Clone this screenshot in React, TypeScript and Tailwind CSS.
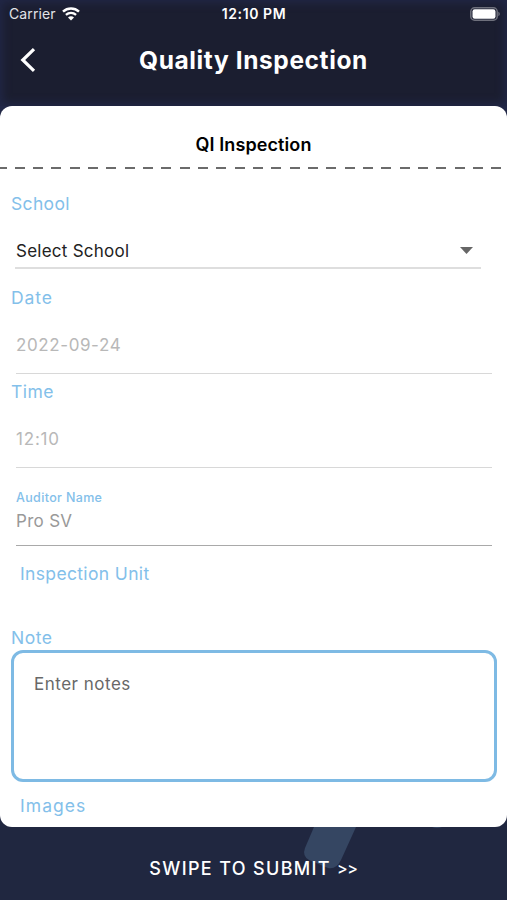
import { useState } from "react";

const dashes = Array.from({ length: 28 });

function WifiIcon() {
  return (
    <svg width="18" height="14" viewBox="0 0 18 14" fill="none">
      <path d="M1 4.7C5.6.5 12.4.5 17 4.7" stroke="#fff" strokeWidth="2.5" />
      <path d="M3.9 7.9C6.9 5.3 11.1 5.3 14.1 7.9" stroke="#fff" strokeWidth="2.3" />
      <path d="M9 13.4 6 10.4C7.7 9 10.3 9 12 10.4Z" fill="#fff" />
    </svg>
  );
}

function BatteryIcon() {
  return (
    <svg width="31" height="14" viewBox="0 0 31 14">
      <rect x="0.8" y="0.8" width="26.4" height="12.4" rx="3.8" fill="none" stroke="#6e707c" strokeWidth="1.5" />
      <rect x="2.5" y="2.3" width="23" height="9.4" rx="2.2" fill="#fff" />
      <path d="M28.3 4.8C30.3 5.5 30.3 8.5 28.3 9.2Z" fill="#6e707c" />
    </svg>
  );
}

function StatusBar() {
  return (
    <div className="grid h-7 grid-cols-3 items-center pl-[9px] pr-[6px] text-white">
      <div className="flex items-center gap-[6px] text-[14px] leading-none tracking-[0.1px] text-[#e2e3e8]">
        <span>Carrier</span>
        <WifiIcon />
      </div>
      <span className="-ml-[2px] text-center text-[14px] font-semibold leading-none tracking-[0.6px]">
        12:10 PM
      </span>
      <div className="flex justify-end">
        <BatteryIcon />
      </div>
    </div>
  );
}

export default function App() {
  const [note, setNote] = useState("");

  return (
    <div className="flex h-[900px] w-[507px] flex-col overflow-hidden bg-[#202740] font-['Inter',sans-serif]">
      {/* Header */}
      <header className="h-[106px] shrink-0 bg-[#1b1e30] shadow-[inset_0_0_9px_3px_#212746]">
        <StatusBar />
        <div className="grid h-16 grid-cols-[60px_1fr_60px] items-center">
          <button className="pl-5" aria-label="Back">
            <svg width="16" height="26" viewBox="0 0 16 26" fill="none">
              <path d="M14 2.2 2.8 13 14 23.8" stroke="#fff" strokeWidth="3.2" />
            </svg>
          </button>
          <h1 className="text-center text-[24.5px] font-bold leading-none tracking-[0.6px] text-white">
            Quality Inspection
          </h1>
        </div>
      </header>

      {/* Form */}
      <div className="h-[721px] shrink-0 bg-[linear-gradient(#212746,#212746_50%,#202740_50%)]">
        <main className="flex h-full flex-col rounded-[12px] bg-white text-[17px]">
          <h2 className="flex h-[61px] shrink-0 items-center justify-center pt-[15px] text-[18px] font-semibold tracking-[0.1px] text-black">
            QI Inspection
          </h2>
          <div className="-ml-[3.5px] flex h-[2px] w-[507px] shrink-0 gap-[8.33px]">
            {dashes.map((_, index) => (
              <span key={index} className="h-[2px] w-[10px] shrink-0 bg-[#6b6b6b]" />
            ))}
          </div>

          <label className="mt-[22px] h-6 pl-[11px] pt-px text-[17.5px] leading-6 tracking-[0.35px] text-[#83c0ea]">School</label>
          <div className="ml-[15px] mr-[26px] mt-[17px] flex h-[37px] items-center justify-between border-b-2 border-[#dedede] pr-2 text-[#222]">
            <span className="pl-px pt-[5px] tracking-[0.25px]">Select School</span>
            <svg className="mt-[2px]" width="13" height="7" viewBox="0 0 13 7">
              <path d="M0 0H13L6.5 7Z" fill="#666" />
            </svg>
          </div>

          <label className="mt-[17px] h-6 pl-[11px] text-[17.5px] leading-6 tracking-[0.9px] text-[#83c0ea]">Date</label>
          <div className="ml-4 mr-[15px] mt-[6px] flex h-[58px] items-center border-b border-[#d8d8d8] pt-[3px] tracking-[0.6px] text-[#b8b8b8]">
            2022-09-24
          </div>

          <label className="mt-[6px] h-6 pl-[11px] text-[17.5px] leading-6 tracking-[0.5px] text-[#83c0ea]">Time</label>
          <div className="ml-4 mr-[15px] mt-[6px] flex h-[58px] items-center border-b border-[#d8d8d8] pt-[3px] tracking-[0.8px] text-[#b8b8b8]">
            12:10
          </div>

          <div className="ml-4 mr-[15px] mt-[21px] flex h-[57px] flex-col border-b border-[#a9a9a9]">
            <label className="h-4 pt-px text-[12.5px] font-medium leading-4 tracking-[0.35px] text-[#83c0ea]">
              Auditor Name
            </label>
            <span className="mt-1 h-6 leading-6 tracking-[0.3px] text-[#999]">Pro SV</span>
          </div>

          <label className="mt-4 h-6 pl-5 text-[17.5px] leading-6 tracking-[0.35px] text-[#83c0ea]">Inspection Unit</label>

          <label className="mt-10 h-6 pl-[11px] text-[17.5px] leading-6 tracking-[0.5px] text-[#83c0ea]">Note</label>
          <textarea
            value={note}
            onChange={(e) => setNote(e.target.value)}
            placeholder="Enter notes"
            className="ml-[11px] mr-[10px] h-[132px] shrink-0 resize-none rounded-[12px] border-[3.5px] border-[#7ebae4] px-5 pt-[19px] leading-6 tracking-[0.5px] outline-none placeholder:text-[#686868]"
          />

          <label className="mt-3 h-6 pl-5 text-[17.5px] leading-6 tracking-[1.05px] text-[#83c0ea]">Images</label>
        </main>
      </div>

      {/* Submit */}
      <footer className="relative flex h-[73px] shrink-0 items-center justify-center pt-[10px]">
        <svg className="absolute left-[300px] top-0" width="150" height="44" viewBox="0 0 150 44">
          <path d="M14 0H56L41 33Q36 43 28 41L9 33Q2 29 5 21Z" fill="#354662" />
          <path d="M132 0H142Q137 2 132 0Z" fill="#354662" />
        </svg>
        <button className="relative flex items-center gap-[6px] text-[18px] font-medium leading-none tracking-[1.35px] text-white">
          <span>SWIPE TO SUBMIT</span>
          <span className="-mt-px text-[16px] tracking-[-0.3px]">&gt;&gt;</span>
        </button>
      </footer>
    </div>
  );
}
